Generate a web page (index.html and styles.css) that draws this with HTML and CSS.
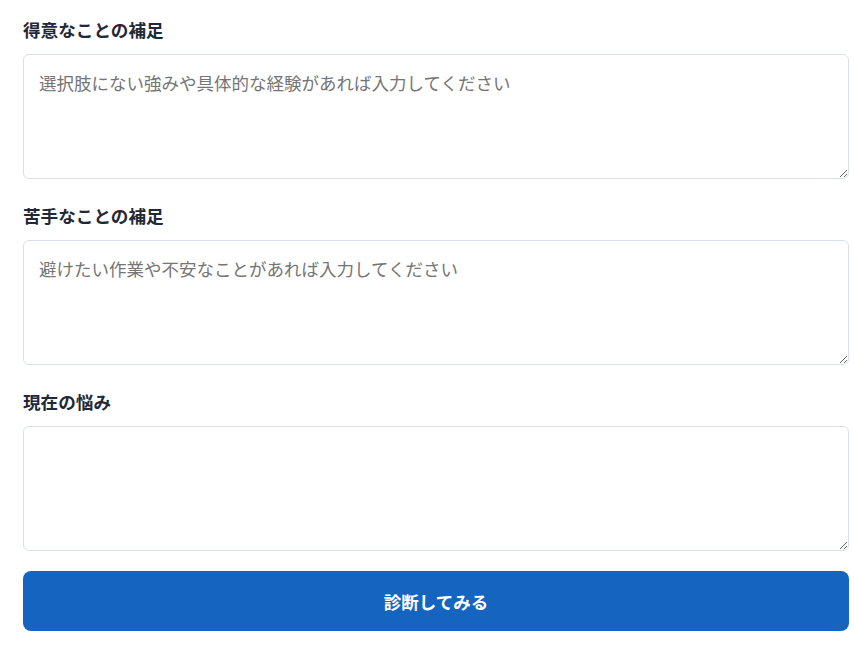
FILE: index.html
```html
<!DOCTYPE html>
<html lang="ja">
<head>
<meta charset="utf-8">
<link rel="stylesheet" href="styles.css">
</head>
<body>
<form class="form">
  <div class="field">
    <label class="label" for="good">得意なことの補足</label>
    <textarea id="good" class="textarea" placeholder="選択肢にない強みや具体的な経験があれば入力してください"></textarea>
  </div>
  <div class="field">
    <label class="label" for="bad">苦手なことの補足</label>
    <textarea id="bad" class="textarea" placeholder="避けたい作業や不安なことがあれば入力してください"></textarea>
  </div>
  <div class="field field-last">
    <label class="label" for="worry">現在の悩み</label>
    <textarea id="worry" class="textarea"></textarea>
  </div>
  <button type="button" class="submit">診断してみる</button>
</form>
</body>
</html>
```
FILE: styles.css
```css
html, body {
  margin: 0;
  padding: 0;
  background: #ffffff;
}
body {
  font-family: "Noto Sans CJK JP", "Noto Sans", sans-serif;
}
.form {
  box-sizing: border-box;
  width: 826px;
  margin-left: 23px;
  padding-top: 18px;
  display: flex;
  flex-direction: column;
}
.field {
  display: flex;
  flex-direction: column;
  margin-bottom: 25px;
}
.field-last {
  margin-bottom: 20px;
}
.label {
  display: block;
  font-size: 17.6px;
  line-height: 24px;
  font-weight: 700;
  color: #1f2937;
  margin-bottom: 12px;
}
.textarea {
  box-sizing: border-box;
  width: 100%;
  height: 125px;
  border: 1px solid #d8e0ea;
  border-radius: 6px;
  padding: 15px 15px;
  font-family: "Noto Sans CJK JP", "Noto Sans", sans-serif;
  font-size: 17.5px;
  line-height: 26px;
  color: #1f2937;
  resize: vertical;
  outline: none;
}
.textarea::placeholder {
  color: #757575;
}
.submit {
  height: 60px;
  width: 100%;
  border: none;
  border-radius: 8px;
  background: #1565c0;
  color: #ffffff;
  font-family: "Noto Sans CJK JP", "Noto Sans", sans-serif;
  font-size: 17.5px;
  font-weight: 700;
  cursor: pointer;
}
```
